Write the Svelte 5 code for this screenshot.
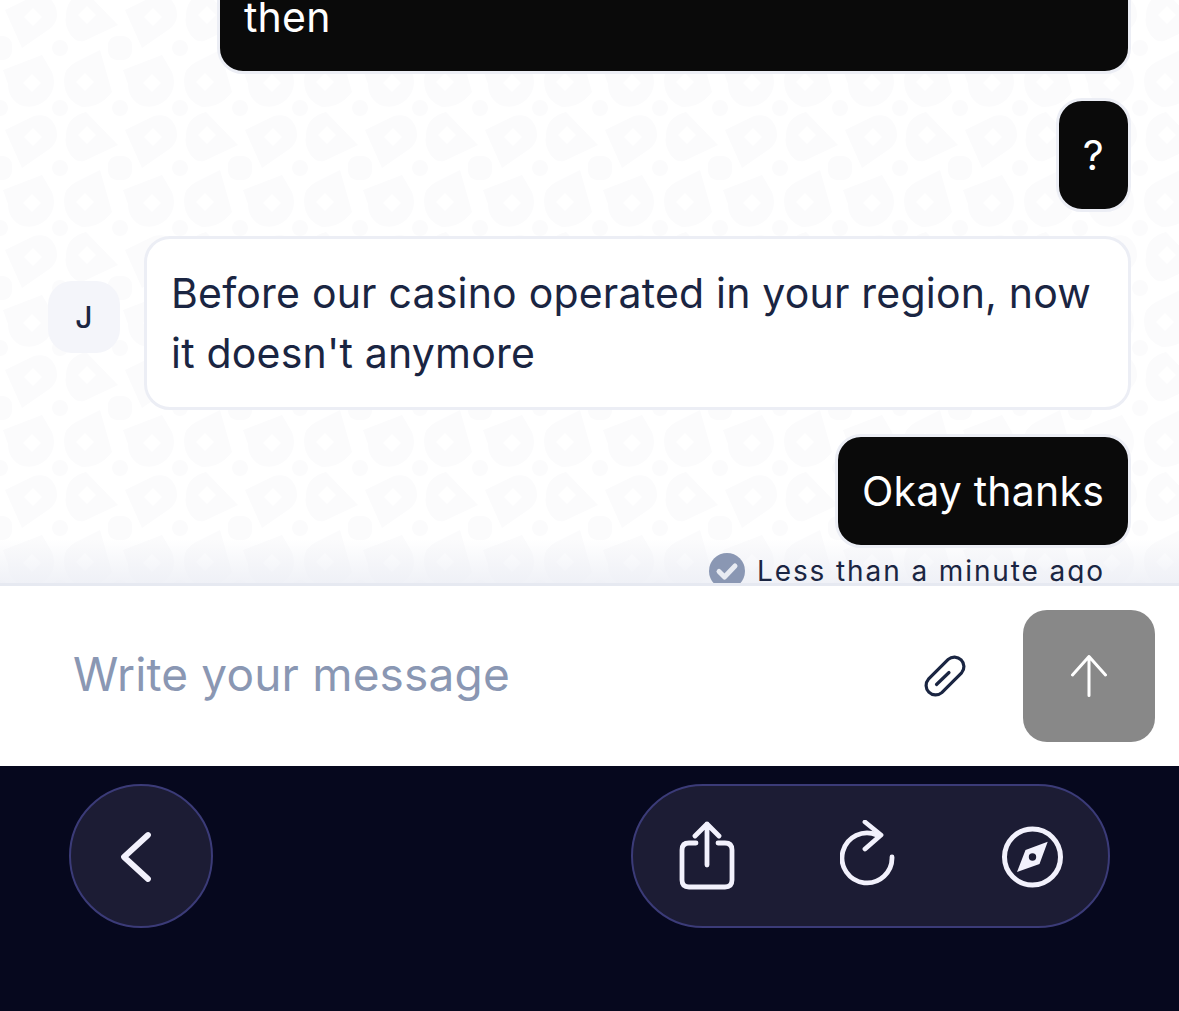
<script>
  // each mark is drawn again one tile over so it wraps across the tile edge
  const offsets = [
    [0, 0],
    [120, 0],
    [0, -120],
    [-120, 0],
  ];
</script>

<div class="page">
  <section class="chat">
    <svg class="pattern" width="100%" height="100%" aria-hidden="true">
      <defs>
        <pattern id="chat-bg" width="120" height="120" patternUnits="userSpaceOnUse" x="0" y="100">
          {#each offsets as [x, y]}
            <g fill="#fbfbfc" fill-rule="evenodd" transform="translate({x} {y})">
              <path d="M5 30 L34 16 Q50 12 56 28 Q60 42 48 50 L22 68 Z M33 28 L24 37 L33 46 L42 37 Z" />
              <path d="M66 36 Q66 20 80 14 L86 12 L118 45 L84 61 Q76 63 70 54 Q64 44 66 36 Z M87 26 L78 35 L87 44 L96 35 Z" />
              <path d="M3 90 L42 75 L52 92 Q58 108 46 120 Q34 130 20 125 Q8 118 8 104 Z M32 94 L23 103 L32 112 L41 103 Z" />
              <path d="M64 100 Q64 88 76 82 L100 70 L112 112 Q100 128 82 127 Q64 120 64 100 Z M85 93 L76 102 L85 111 L94 102 Z" />
              <circle cx="60" cy="8" r="8" />
              <circle cx="0" cy="8" r="8" />
              <circle cx="60" cy="68" r="8" />
              <rect x="-12" y="56" width="24" height="24" rx="9" />
            </g>
          {/each}
        </pattern>
      </defs>
      <rect width="100%" height="100%" fill="url(#chat-bg)" />
    </svg>
    <div class="fade"></div>

    <div class="thread">
      <div class="row out">
        <div class="bubble dark first">then</div>
      </div>
      <div class="row out">
        <div class="bubble dark">?</div>
      </div>
      <div class="row in">
        <div class="avatar">J</div>
        <div class="bubble light">Before our casino operated in your region, now it doesn't anymore</div>
      </div>
      <div class="row out">
        <div class="bubble dark">Okay thanks</div>
      </div>
      <div class="status">
        <svg width="36" height="36" viewBox="0 0 36 36" aria-hidden="true">
          <circle cx="18" cy="18" r="18" fill="#8a97b3" />
          <path d="M10 18.5 L15.500 24 L26 13" fill="none" stroke="#e8ebf2" stroke-width="5" stroke-linecap="round" stroke-linejoin="round" />
        </svg>
        <span>Less than a minute ago</span>
      </div>
    </div>
  </section>

  <section class="composer">
    <div class="placeholder">Write your message</div>
    <button class="attach" aria-label="Attach">
      <svg width="42" height="42" viewBox="0 0 42 42" fill="none" stroke="#1a2542" stroke-width="3.2" stroke-linecap="round" stroke-linejoin="round">
        <path d="M24.200 4.400 L4.400 24.200 A9.500 9.500 0 0 0 17.800 37.600 L37.600 17.800 A9.500 9.500 0 0 0 24.200 4.400 Z" />
        <path d="M12.500 29.500 L25 17.500" />
      </svg>
    </button>
    <button class="send" aria-label="Send">
      <svg width="36" height="42" viewBox="0 0 36 42" fill="none" stroke="#fff" stroke-width="3" stroke-linecap="round" stroke-linejoin="round">
        <path d="M18 40.500 V1.500 M1.500 20 L18 1.500 L34.500 20" />
      </svg>
    </button>
  </section>

  <nav class="browser">
    <div class="pill round">
      <svg width="36" height="58" viewBox="0 0 36 58" fill="none" stroke="#f2f1fc" stroke-width="5.8" stroke-linecap="round" stroke-linejoin="round">
        <path d="M29 8 L5 30 L29 52" />
      </svg>
    </div>
    <div class="pill wide">
      <svg width="58" height="70" viewBox="0 0 58 70" fill="none" stroke="#f2f1fc" stroke-width="4.8" stroke-linecap="round" stroke-linejoin="round">
        <path d="M18 22 H11 Q4 22 4 29 V59 Q4 66 11 66 H47 Q54 66 54 59 V29 Q54 22 47 22 H40" />
        <path d="M29 44 V3 M17 15 L29 3 L41 15" />
      </svg>
      <svg width="57" height="72" viewBox="0 0 57 72" fill="none" stroke="#f2f1fc" stroke-width="4.8" stroke-linecap="round" stroke-linejoin="round">
        <path d="M52 37 A25 25 0 1 1 37 15" />
        <path d="M25 2 L41 15 L25 29" />
      </svg>
      <svg class="compass" width="63" height="64" viewBox="0 0 63 64" fill="none">
        <circle cx="31.500" cy="32" r="28" stroke="#f2f1fc" stroke-width="5" />
        <path fill-rule="evenodd" fill="#f2f1fc" d="M46.700 16.700 L38.500 39 L16 47 L24.500 25 Z M31.500 28.300 A3.700 3.700 0 1 0 31.500 35.700 A3.700 3.700 0 1 0 31.500 28.300 Z" />
      </svg>
    </div>
  </nav>
</div>

<style>
  :global(body) {
    margin: 0;
    background: #06081e;
  }
  .page {
    width: 1179px;
    height: 1011px;
    display: flex;
    flex-direction: column;
    font-family: Inter, "Liberation Sans", sans-serif;
    overflow: hidden;
  }
  .chat {
    position: relative;
    box-sizing: border-box;
    height: 586px;
    flex: none;
    overflow: hidden;
    background: #fff;
    border-bottom: 3px solid #e6e9f1;
    display: flex;
    flex-direction: column;
    justify-content: flex-end;
  }
  .pattern {
    position: absolute;
    inset: 0;
  }
  .fade {
    position: absolute;
    left: 0;
    right: 0;
    bottom: 0;
    height: 44px;
    background: linear-gradient(rgba(240, 242, 247, 0), rgba(236, 238, 245, 0.8));
  }
  .thread {
    position: relative;
    display: flex;
    flex-direction: column;
    gap: 24px;
    padding: 0 48px;
    margin-bottom: -6px;
  }
  .row {
    display: flex;
    align-items: center;
  }
  .row.out {
    justify-content: flex-end;
  }
  .row.in {
    gap: 24px;
  }
  .bubble {
    box-sizing: border-box;
    border: 3px solid #eceef5;
    border-radius: 26px;
    padding: 24px;
    font-size: 41px;
    line-height: 60px;
    letter-spacing: 0.2px;
  }
  .bubble.first {
    width: 914px;
  }
  .dark {
    background: #0a0a0a;
    color: #fff;
  }
  .light {
    flex: 1;
    background: #fff;
    color: #1a2542;
  }
  .avatar {
    width: 72px;
    height: 72px;
    flex: none;
    margin-bottom: 12px;
    border-radius: 24px;
    background: #f4f5fa;
    color: #1a2542;
    font-size: 30px;
    font-weight: 500;
    display: flex;
    align-items: center;
    justify-content: center;
  }
  .status {
    display: flex;
    justify-content: flex-end;
    align-items: center;
    gap: 12px;
    margin-top: -19px;
    padding-right: 26px;
    color: #1a2542;
    font-size: 28px;
    line-height: 36px;
    letter-spacing: 1.9px;
  }
  .composer {
    height: 180px;
    flex: none;
    background: #fff;
    display: flex;
    align-items: center;
    padding: 0 24px 0 73px;
  }
  .placeholder {
    flex: 1;
    font-size: 46px;
    letter-spacing: 0.17px;
    color: #8a97b3;
    margin-top: -4px;
  }
  button {
    border: none;
    padding: 0;
    background: none;
    display: flex;
    align-items: center;
    justify-content: center;
  }
  .attach {
    margin-right: 57px;
  }
  .send {
    width: 132px;
    height: 132px;
    border-radius: 24px;
    background: #888888;
  }
  .browser {
    flex: 1;
    background: #06081e;
    display: flex;
    justify-content: space-between;
    align-items: flex-start;
    padding: 18px 69px 0 69px;
  }
  .pill {
    box-sizing: border-box;
    height: 144px;
    background: #1c1c34;
    border: 2px solid #3b3b78;
    display: flex;
    align-items: center;
  }
  .round {
    width: 144px;
    border-radius: 50%;
    justify-content: center;
    padding-right: 8px;
  }
  .wide {
    width: 479px;
    border-radius: 72px;
    justify-content: space-between;
    padding: 0 44px 0 45px;
  }
  .compass {
    margin-top: 2px;
  }
</style>
